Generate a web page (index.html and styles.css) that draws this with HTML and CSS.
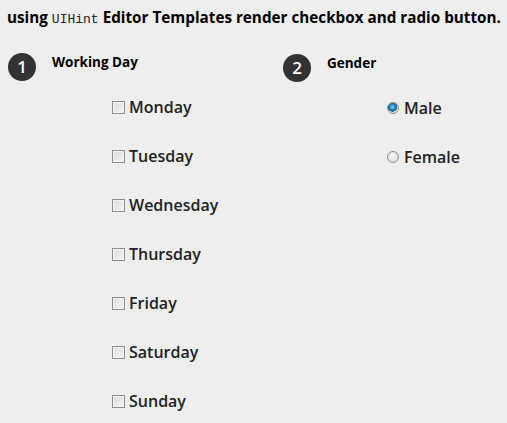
FILE: index.html
```html
<!DOCTYPE html>
<html>
    <head>
        <meta charset="UTF-8">
        <meta name="viewport" content="width=device-width, initial-scale=1.0">
        <link rel="stylesheet" href="styles.css">
    </head>
    <body>
        <h3 class="title">using <code>UIHint</code> Editor Templates render checkbox and radio button.</h3>

        <div class="columns">
            <div class="column">
                <div class="step">
                    <span class="step-num">1</span>
                    <span class="step-label">Working Day</span>
                </div>
                <ul class="options">
                    <li><label><input type="checkbox" class="check"> Monday</label></li>
                    <li><label><input type="checkbox" class="check"> Tuesday</label></li>
                    <li><label><input type="checkbox" class="check"> Wednesday</label></li>
                    <li><label><input type="checkbox" class="check"> Thursday</label></li>
                    <li><label><input type="checkbox" class="check"> Friday</label></li>
                    <li><label><input type="checkbox" class="check"> Saturday</label></li>
                    <li><label><input type="checkbox" class="check"> Sunday</label></li>
                </ul>
            </div>
            <div class="column column-gender">
                <div class="step">
                    <span class="step-num">2</span>
                    <span class="step-label">Gender</span>
                </div>
                <ul class="options">
                    <li><label><input type="radio" name="gender" class="radio" checked> Male</label></li>
                    <li><label><input type="radio" name="gender" class="radio"> Female</label></li>
                </ul>
            </div>
        </div>
    </body>
</html>
```

FILE: styles.css
```css
body {
    margin: 0;
    padding: 0 5px 0 7px;
    background: #eeeeee;
    color: #000;
    font-family: "Open Sans", "DejaVu Sans", sans-serif;
}

.title {
    margin: 6px 0 0 0;
    font-size: 15.25px;
    font-weight: bold;
    line-height: 22px;
    white-space: nowrap;
}
.title code {
    font-family: "Liberation Mono", monospace;
    font-size: 13px;
    font-weight: normal;
    color: #222;
}

.columns {
    display: flex;
    margin-top: 22px;
}
.column {
    width: 274px;
    flex-shrink: 0;
    padding-left: 1px;
}
.column-gender {
    width: auto;
    flex: 1;
    padding-top: 1px;
}

.step {
    display: flex;
    align-items: flex-start;
}
.step-num {
    width: 28px;
    height: 28px;
    border-radius: 50%;
    background: #333;
    color: #fff;
    font-size: 17px;
    font-weight: 600;
    line-height: 28px;
    text-align: center;
    flex-shrink: 0;
}
.step-label {
    margin: 1px 0 0 16px;
    font-size: 13.5px;
    font-weight: bold;
    line-height: 16px;
}

.options {
    list-style: none;
    margin: 15px 0 0 104px;
    padding: 0;
}
.options li {
    height: 49px;
}
.options label {
    display: flex;
    align-items: center;
    font-size: 16px;
    font-weight: 600;
    color: #222;
    line-height: 22px;
}

.check {
    -webkit-appearance: none;
    appearance: none;
    width: 13px;
    height: 13px;
    margin: 0 4px 0 0;
    border: 1px solid #8e8f8f;
    background: linear-gradient(135deg, #dcdcdc 0%, #f4f4f4 100%);
    box-shadow: inset 0 0 0 1px #f4f4f4;
}
.radio {
    -webkit-appearance: none;
    appearance: none;
    width: 12px;
    height: 12px;
    margin: 0 5px 0 0;
    border: 1px solid #8e8f8f;
    border-radius: 50%;
    background: radial-gradient(circle at 40% 40%, #f8f8f8 0%, #d4d4d4 100%);
}
.radio:checked {
    background: radial-gradient(circle at 45% 40%, #7ed0f5 0%, #1d8ac0 35%, #175c82 55%, #e6e6e6 60%, #dcdcdc 100%);
}
```
